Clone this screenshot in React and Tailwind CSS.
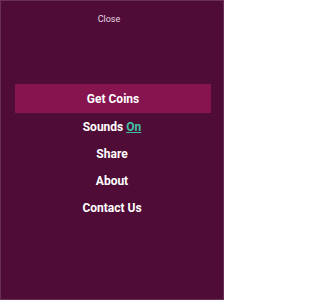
import React from "react";

const items = ["Share", "About", "Contact Us"];

const App = () => {
  return (
    <div className="w-[224px] h-[300px] bg-[#4f0c36] border border-[#6a2f55] font-['Roboto',sans-serif] overflow-hidden">
      <div className="pt-[13px] pr-[6px] h-[83px] text-center text-[9px] leading-[10px] text-[#e6d8e0]">
        Close
      </div>

      <button className="ml-[14px] w-[196px] h-[29px] bg-[#85144f] text-white text-[12px] font-bold flex items-center justify-center">
        Get Coins
      </button>

      <div className="flex flex-col">
        <div className="h-[27px] flex items-center justify-center text-[12px] font-bold text-white">
          Sounds&nbsp;<span className="text-[#3fc2a4] underline">On</span>
        </div>
        {items.map((label) => (
          <div
            key={label}
            className="h-[27px] flex items-center justify-center text-[12px] font-bold text-white"
          >
            {label}
          </div>
        ))}
      </div>
    </div>
  );
};

export default App;
